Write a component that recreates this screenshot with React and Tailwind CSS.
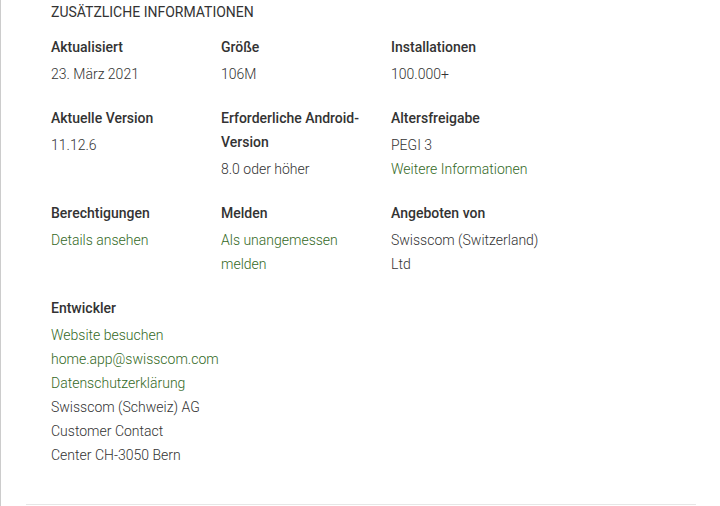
export default function App() {
  const green = "text-[#33691e]";
  const Cell = ({ label, children }) => (
    <div className="flex flex-col">
      <div className="text-[14px] leading-[24px] font-medium text-[#333] mb-[3px]">{label}</div>
      <div className="text-[14px] leading-[24px] font-light text-[#333]">{children}</div>
    </div>
  );
  return (
    <div className="w-[720px] h-[506px] bg-white overflow-hidden" style={{ fontFamily: "Roboto, Arial, sans-serif" }}>
      <div className="h-full border-l border-[#cccccc] pl-[25px] flex flex-col">
        <div className="w-[670px] border-b border-[#e6e6e6] pl-[25px] pb-[37px]">
          <div className="text-[14px] leading-[24px] text-[#333] uppercase mb-[11px]">Zusätzliche Informationen</div>
          <div className="grid grid-cols-[170px_170px_170px] gap-y-[20px]">
            <Cell label="Aktualisiert">23. März 2021</Cell>
            <Cell label="Größe">106M</Cell>
            <Cell label="Installationen">100.000+</Cell>
            <Cell label="Aktuelle Version">11.12.6</Cell>
            <div className="flex flex-col pr-[16px]">
              <div className="text-[14px] leading-[24px] font-medium text-[#333] mb-[3px]">Erforderliche Android-<br />Version</div>
              <div className="text-[14px] leading-[24px] font-light text-[#333]">8.0 oder höher</div>
            </div>
            <Cell label="Altersfreigabe">
              <div>PEGI 3</div>
              <div className={green}>Weitere Informationen</div>
            </Cell>
            <Cell label="Berechtigungen">
              <span className={green}>Details ansehen</span>
            </Cell>
            <Cell label="Melden">
              <div className={green}>Als unangemessen<br />melden</div>
            </Cell>
            <Cell label="Angeboten von">
              <div>Swisscom (Switzerland)<br />Ltd</div>
            </Cell>
            <Cell label="Entwickler">
              <div className={green}>Website besuchen</div>
              <div className={green}>home.app@swisscom.com</div>
              <div className={green}>Datenschutzerklärung</div>
              <div>Swisscom (Schweiz) AG</div>
              <div>Customer Contact</div>
              <div>Center CH-3050 Bern</div>
            </Cell>
          </div>
        </div>
      </div>
    </div>
  );
}
